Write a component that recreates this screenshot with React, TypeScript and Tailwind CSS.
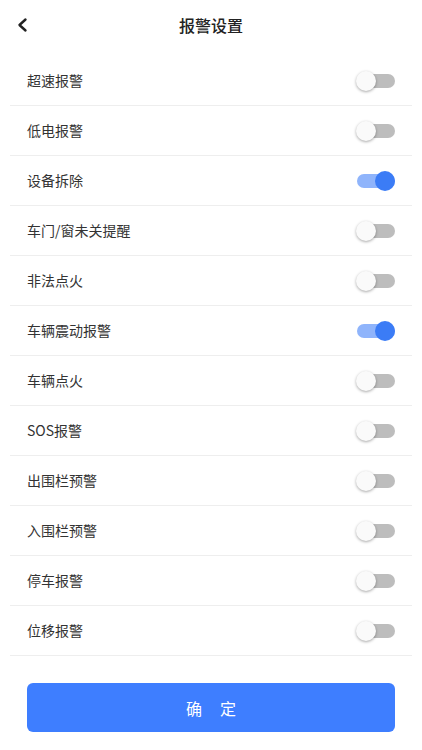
import { useState } from "react";

const items = [
  { label: "超速报警", on: false },
  { label: "低电报警", on: false },
  { label: "设备拆除", on: true },
  { label: "车门/窗未关提醒", on: false },
  { label: "非法点火", on: false },
  { label: "车辆震动报警", on: true },
  { label: "车辆点火", on: false },
  { label: "SOS报警", on: false },
  { label: "出围栏预警", on: false },
  { label: "入围栏预警", on: false },
  { label: "停车报警", on: false },
  { label: "位移报警", on: false },
];

function Toggle({ on, onClick }: { on: boolean; onClick: () => void }) {
  return (
    <button onClick={onClick} className="relative flex h-5 w-[40px] items-center">
      <span className={`ml-[2px] h-[14px] w-[38px] rounded-full ${on ? "bg-[#8fb4fb]" : "bg-[#bdbdbd]"}`} />
      <span
        className={`absolute top-0 h-5 w-5 rounded-full ${
          on ? "left-[20px] bg-[#3b7cf6]" : "left-[1px] bg-[#fafafa] shadow-[0_1px_3px_rgba(0,0,0,0.35)]"
        }`}
      />
    </button>
  );
}

export default function App() {
  const [list, setList] = useState(items);

  return (
    <div className="min-h-[750px] bg-white font-['Noto_Sans_CJK_SC',sans-serif] text-[#333]">
      <div className="relative flex h-[50px] items-center justify-center">
        <svg className="absolute left-[16px] top-[17px]" width="14" height="16" viewBox="0 0 14 16" fill="none">
          <path d="M9.5 2.5 L3.5 8 L9.5 13.5" stroke="#222" strokeWidth="2.4" strokeLinecap="round" strokeLinejoin="round" />
        </svg>
        <h1 className="text-[16px] font-medium text-[#222]">报警设置</h1>
      </div>
      <div className="mx-[10px] mt-[6px]">
        {list.map((item, i) => (
          <div key={item.label} className="flex h-[50px] items-center justify-between border-b border-[#eeeeee] pl-[17px] pr-[17px]">
            <span className="text-[14px]">{item.label}</span>
            <Toggle
              on={item.on}
              onClick={() => setList(list.map((x, j) => (j === i ? { ...x, on: !x.on } : x)))}
            />
          </div>
        ))}
      </div>
      <div className="px-[27px] pt-[27px]">
        <button className="flex h-[49px] w-full items-center justify-center rounded-[6px] bg-[#3e7eff] text-[16px] tracking-[18px] text-white">
          <span className="pl-[18px]">确定</span>
        </button>
      </div>
    </div>
  );
}
